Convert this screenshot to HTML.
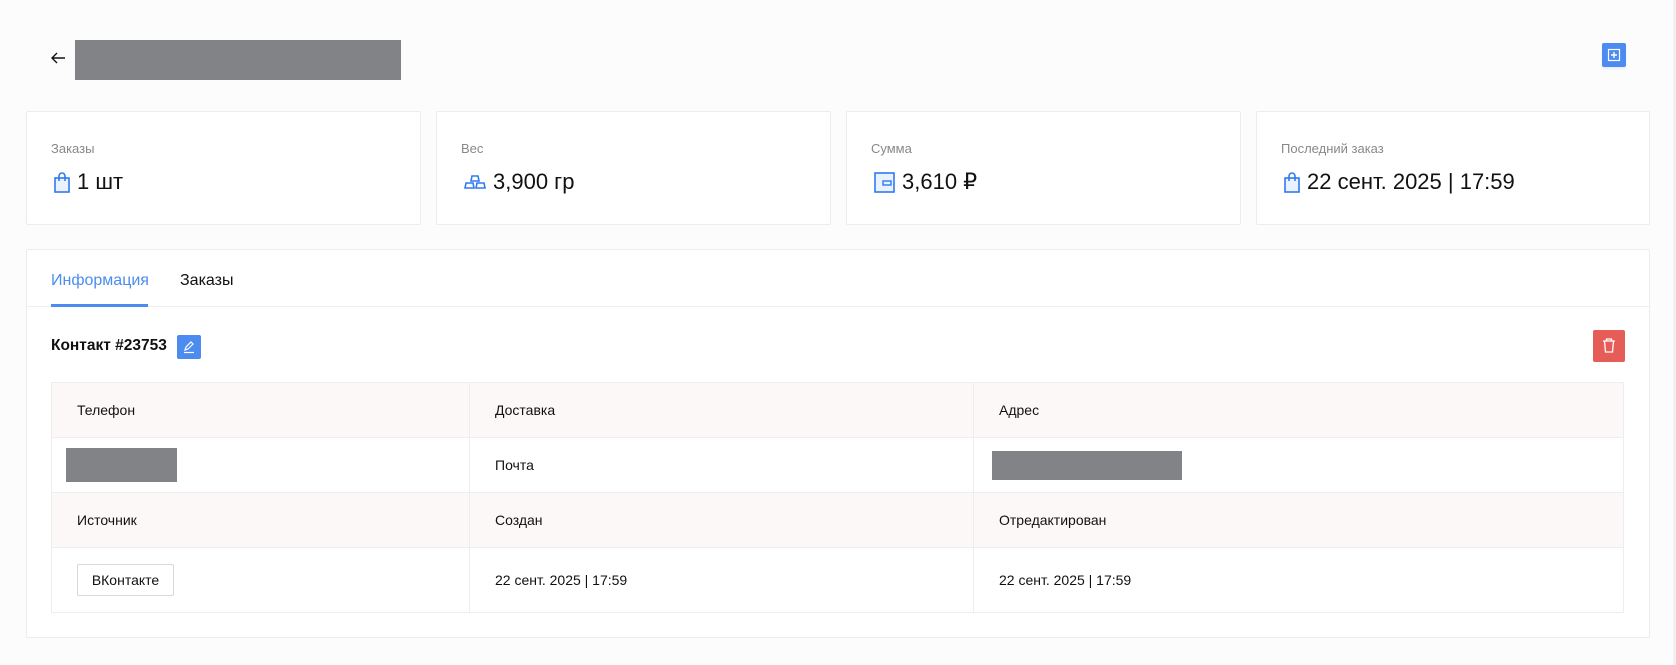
<!DOCTYPE html>
<html><head><meta charset="utf-8"><style>
*{box-sizing:border-box;margin:0;padding:0}
body{width:1676px;height:665px;background:#fcfcfc;font-family:"Liberation Sans","DejaVu Sans",sans-serif;color:#111;position:relative;overflow:hidden}
.a{position:absolute}
.card{position:absolute;top:111px;height:114px;background:#fff;border:1px solid #ececec;border-radius:2px}
.lbl{position:absolute;left:24px;top:29px;font-size:13px;color:#888}
.val{position:absolute;left:27px;top:57px;font-size:22px;display:flex;align-items:center;gap:7px;color:#111}
.val svg{display:block}
.gray{background:#828387}
.tbl{position:absolute;left:51px;top:382px;width:1573px;border:1px solid #eeeeee;background:#fff}
.row{display:flex;height:55px;border-bottom:1px solid #eeeeee;font-size:14px;align-items:center}
.row:last-child{border-bottom:none;height:64px}
.row.h{background:#fdf8f8}
.c{height:100%;display:flex;align-items:center;padding-left:25px;border-right:1px solid #eeeeee}
.c:last-child{border-right:none}
.c1{width:418px}.c2{width:504px}.c3{flex:1}
</style></head><body>
<div class="a" style="right:0;top:0;width:3px;height:665px;background:#f1f1f1"></div>
<svg class="a" style="left:50px;top:51px" width="16" height="14" viewBox="0 0 16 14"><path d="M15 7H2M7 2L2 7l5 5" fill="none" stroke="#111" stroke-width="1.4"/></svg>
<div class="a gray" style="left:75px;top:40px;width:326px;height:40px"></div>
<div class="a" style="left:1602px;top:43px;width:24px;height:24px;background:#4c8bf0;border-radius:2px;box-shadow:0 2px 2px #e6eefc"><svg width="24" height="24"><rect x="6.5" y="6.5" width="11" height="11" fill="none" stroke="#fff" stroke-width="1.2"/><path d="M12 9v6M9 12h6" stroke="#fff" stroke-width="1.4"/></svg></div>

<div class="card" style="left:26px;width:395px"><div class="lbl">Заказы</div><div class="val"><svg width="16" height="21" viewBox="0 0 16 21"><rect x="1" y="6" width="14" height="14" fill="#eaf2fe" stroke="#2f7bf0" stroke-width="1.6"/><path d="M5 9V4a3 3 0 0 1 6 0v5" fill="none" stroke="#2f7bf0" stroke-width="1.6"/></svg>1 шт</div></div>
<div class="card" style="left:436px;width:395px"><div class="lbl">Вес</div><div class="val"><svg width="22" height="16" viewBox="0 0 22 16"><path d="M8 2h6l1 5H7z M2 9h7l1 5H1z M13 9h7l1 5h-9z" fill="none" stroke="#2f7bf0" stroke-width="1.6"/></svg>3,900 гр</div></div>
<div class="card" style="left:846px;width:395px"><div class="lbl">Сумма</div><div class="val"><svg width="21" height="21" viewBox="0 0 21 21"><rect x="1" y="1" width="19" height="19" fill="#eaf2fe" stroke="#2f7bf0" stroke-width="1.6"/><rect x="9" y="9" width="8" height="4" fill="none" stroke="#2f7bf0" stroke-width="1.4"/></svg>3,610 ₽</div></div>
<div class="card" style="left:1256px;width:394px"><div class="lbl">Последний заказ</div><div class="val"><svg width="16" height="21" viewBox="0 0 16 21"><rect x="1" y="6" width="14" height="14" fill="#eaf2fe" stroke="#2f7bf0" stroke-width="1.6"/><path d="M5 9V4a3 3 0 0 1 6 0v5" fill="none" stroke="#2f7bf0" stroke-width="1.6"/></svg>22 сент. 2025 | 17:59</div></div>

<div class="a" style="left:26px;top:249px;width:1624px;height:389px;background:#fff;border:1px solid #ececec;border-radius:2px">
 <div class="a" style="left:0;top:56px;width:100%;height:1px;background:#eeeeee"></div>
 <div class="a" style="left:24px;top:22px;font-size:16px;color:#4c8bf0">Информация</div>
 <div class="a" style="left:24px;top:54px;width:97px;height:3px;background:#4c8bf0"></div>
 <div class="a" style="left:153px;top:22px;font-size:16px;color:#111">Заказы</div>
 <div class="a" style="left:24px;top:87px;font-size:15.5px;font-weight:bold">Контакт #23753</div>
 <div class="a" style="left:150px;top:85px;width:24px;height:24px;background:#4c8bf0;border-radius:2px"><svg width="24" height="24"><path d="M8 15l1-3 5-5 2 2-5 5z" fill="none" stroke="#fff" stroke-width="1.2"/><path d="M7 17.5h10" stroke="#fff" stroke-width="1.2"/></svg></div>
 <div class="a" style="left:1566px;top:80px;width:32px;height:32px;background:#e65c57;border-radius:2px"><svg width="32" height="32"><path d="M10 11h12M13.5 11V9h5v2M11.5 11l1 11h7l1-11" fill="none" stroke="#fff" stroke-width="1.3"/></svg></div>
</div>

<div class="tbl">
 <div class="row h"><div class="c c1">Телефон</div><div class="c c2">Доставка</div><div class="c c3">Адрес</div></div>
 <div class="row"><div class="c c1" style="padding-left:14px"><div class="gray" style="width:111px;height:34px"></div></div><div class="c c2">Почта</div><div class="c c3" style="padding-left:18px"><div class="gray" style="width:190px;height:29px"></div></div></div>
 <div class="row h"><div class="c c1">Источник</div><div class="c c2">Создан</div><div class="c c3">Отредактирован</div></div>
 <div class="row"><div class="c c1"><div style="width:97px;height:32px;border:1px solid #d9d9d9;border-radius:2px;display:flex;align-items:center;justify-content:center;font-size:14px">ВКонтакте</div></div><div class="c c2">22 сент. 2025 | 17:59</div><div class="c c3">22 сент. 2025 | 17:59</div></div>
</div>
</body></html>
